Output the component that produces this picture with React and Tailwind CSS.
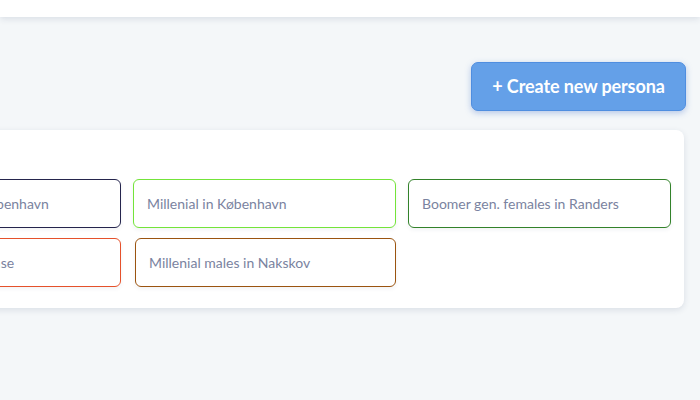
import React from 'react';

// personas shown in the grid, border colour per persona
const personas = [
  { name: 'Gen X females in København', border: 'border-[#25254d]' },
  { name: 'Millenial in København', border: 'border-[#74e43a]' },
  { name: 'Boomer gen. females in Randers', border: 'border-[#33822a]' },
  { name: 'Gen Z males in Odense', border: 'border-[#e5512b]' },
  { name: 'Millenial males in Nakskov', border: 'border-[#9b5410]', shift: 'ml-[2px]' },
];

const App = () => {
  return (
    <div className="w-[700px] h-[400px] overflow-hidden bg-[#f4f7f9] font-['Lato',sans-serif]">
      {/* Top bar */}
      <div className="h-[17px] bg-white shadow-[0_2px_6px_rgba(30,50,90,0.12)]" />

      <div className="ml-[-155px] w-[839px]">
        <div className="flex justify-end pt-[45px] mr-[-2px]">
          <button className="h-[49px] w-[215px] rounded-[7px] bg-[#64a0e8] border border-[#4f8ee0] text-white font-bold text-[18px] tracking-[-0.1px] shadow-[0_2px_6px_rgba(60,110,200,0.35)]">
            + Create new persona
          </button>
        </div>

        {/* Persona card */}
        <div className="mt-[19px] bg-white rounded-[8px] shadow-[0_2px_6px_rgba(30,50,90,0.12)] px-[13px] pt-[49px] pb-[21px]">
          <div className="grid grid-cols-3 gap-x-[12px] gap-y-[10px]">
            {personas.map((p, index) => (
              <div
                key={index}
                className={`h-[49px] flex items-center px-[13px] rounded-[6px] border ${p.border} ${p.shift || ''} text-[14px] text-[#7a83a0] shadow-[0_2px_4px_rgba(30,50,90,0.06)]`}
              >
                {p.name}
              </div>
            ))}
          </div>
        </div>
      </div>
    </div>
  );
};

export default App;
